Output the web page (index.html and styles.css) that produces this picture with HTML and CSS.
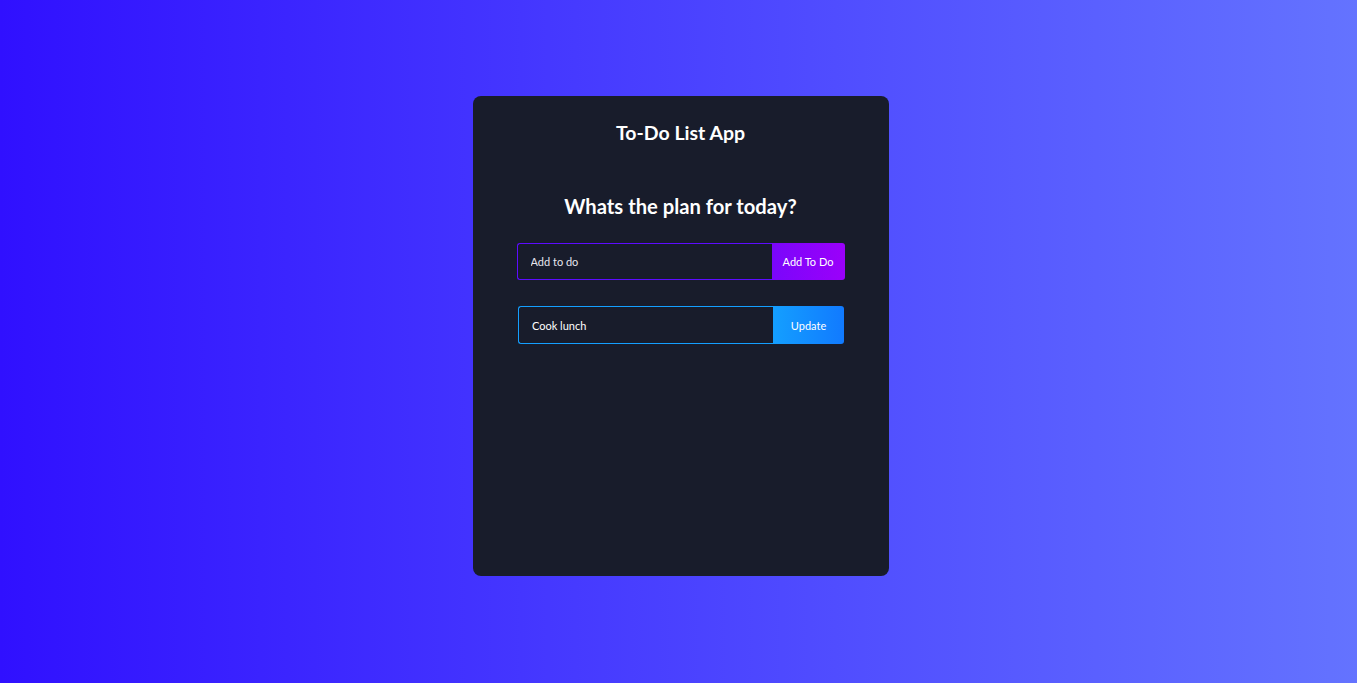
FILE: index.html
```html
<!DOCTYPE html>
<html lang="en">
<head>
<meta charset="utf-8">
<title>To-Do List App</title>
<link rel="stylesheet" href="styles.css">
</head>
<body>
<div class="page">
  <div class="todo-app">
    <h2 class="app-title">To-Do List App</h2>
    <h1 class="plan-title">Whats the plan for today?</h1>
    <form class="todo-form">
      <input class="todo-input" type="text" placeholder="Add to do">
      <button class="todo-button" type="button">Add To Do</button>
    </form>
    <form class="todo-form edit-form">
      <input class="todo-input edit" type="text" value="Cook lunch">
      <button class="todo-button edit" type="button">Update</button>
    </form>
  </div>
</div>
</body>
</html>
```
FILE: styles.css
```css
* { box-sizing: border-box; }
html, body {
  margin: 0;
  padding: 0;
  height: 100%;
}
body {
  background: linear-gradient(90deg, rgb(48, 16, 255) 0%, rgb(100, 115, 255) 100%);
  font-family: Lato, "Liberation Sans", sans-serif;
}
.page {
  display: flex;
  justify-content: center;
  padding-top: 96px;
  padding-left: 4px;
}
.todo-app {
  width: 416px;
  height: 480px;
  background: #181c2b;
  border-radius: 8px;
  display: flex;
  flex-direction: column;
  align-items: center;
  padding-top: 25px;
}
.app-title, .plan-title {
  margin: 0;
  color: #fff;
  font-size: 19.5px;
  font-weight: 700;
  line-height: 24px;
}
.plan-title {
  margin-top: 49px;
  font-size: 20.2px;
}
.todo-form {
  display: flex;
  margin-top: 25px;
  width: 328px;
}
.edit-form {
  margin-top: 26px;
  width: 326px;
  height: 38px;
  margin-left: 1px;
}
.todo-input {
  flex: 1;
  height: 37px;
  border: 1px solid #5d0cff;
  border-right: none;
  border-radius: 3px 0 0 3px;
  background: transparent;
  color: #fff;
  font-family: inherit;
  font-size: 11px;
  padding: 0 13px;
  outline: none;
}
.edit-form .todo-input { height: 38px; border-color: #149fff; }
.todo-input::placeholder { color: #e6e6ee; }
.todo-button {
  width: 73px;
  border: none;
  border-radius: 0 3px 3px 0;
  background: linear-gradient(90deg, #7a06fb 0%, #9b00fa 100%);
  color: #fff;
  font-family: inherit;
  font-size: 11px;
  padding: 0;
}
.todo-button.edit {
  width: 71px;
  background: linear-gradient(90deg, #149fff 0%, #117aff 100%);
}
```
